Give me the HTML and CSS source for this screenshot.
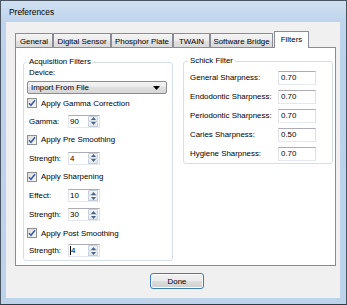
FILE: index.html
```html
<!DOCTYPE html>
<html>
<head>
<meta charset="utf-8">
<link rel="stylesheet" href="styles.css">
</head>
<body>
<div class="window">
  <div class="titlebar"><span class="title">Preferences</span></div>
  <div class="client">
    <div class="tabs">
      <div class="tab w-general">General</div>
      <div class="tab w-digital">Digital Sensor</div>
      <div class="tab w-phosphor">Phosphor Plate</div>
      <div class="tab w-twain">TWAIN</div>
      <div class="tab w-bridge">Software Bridge</div>
      <div class="tab active w-filters">Filters</div>
    </div>
    <div class="panel">
      <fieldset class="group acq">
        <legend>Acquisition Filters</legend>
        <div class="device-label">Device:</div>
        <div class="select"><span class="select-text">Import From File</span><svg class="select-arrow" width="7" height="4" viewBox="0 0 7 4"><path d="M0 0H7L3.5 4Z" fill="#000"/></svg></div>
        <div class="row check r18"><span class="box"><svg width="8" height="8" viewBox="0 0 8 8"><path d="M1 4.2L3 6.3L7 1.2" fill="none" stroke="#3c5ba0" stroke-width="1.5"/></svg></span>Apply Gamma Correction</div>
        <div class="row r18"><span class="spin-label">Gamma:</span><div class="spin"><span class="val">90</span><span class="btns"><span class="sb"><svg width="5" height="3" viewBox="0 0 5 3"><path d="M0 3H5L2.5 0Z" fill="#4d6185"/></svg></span><span class="sb"><svg width="5" height="3" viewBox="0 0 5 3"><path d="M0 0H5L2.5 3Z" fill="#4d6185"/></svg></span></span></div></div>
        <div class="row check r19"><span class="box"><svg width="8" height="8" viewBox="0 0 8 8"><path d="M1 4.2L3 6.3L7 1.2" fill="none" stroke="#3c5ba0" stroke-width="1.5"/></svg></span>Apply Pre Smoothing</div>
        <div class="row r18"><span class="spin-label">Strength:</span><div class="spin"><span class="val">4</span><span class="btns"><span class="sb"><svg width="5" height="3" viewBox="0 0 5 3"><path d="M0 3H5L2.5 0Z" fill="#4d6185"/></svg></span><span class="sb"><svg width="5" height="3" viewBox="0 0 5 3"><path d="M0 0H5L2.5 3Z" fill="#4d6185"/></svg></span></span></div></div>
        <div class="row check r19"><span class="box"><svg width="8" height="8" viewBox="0 0 8 8"><path d="M1 4.2L3 6.3L7 1.2" fill="none" stroke="#3c5ba0" stroke-width="1.5"/></svg></span>Apply Sharpening</div>
        <div class="row r19"><span class="spin-label">Effect:</span><div class="spin"><span class="val">10</span><span class="btns"><span class="sb"><svg width="5" height="3" viewBox="0 0 5 3"><path d="M0 3H5L2.5 0Z" fill="#4d6185"/></svg></span><span class="sb"><svg width="5" height="3" viewBox="0 0 5 3"><path d="M0 0H5L2.5 3Z" fill="#4d6185"/></svg></span></span></div></div>
        <div class="row r19"><span class="spin-label">Strength:</span><div class="spin"><span class="val">30</span><span class="btns"><span class="sb"><svg width="5" height="3" viewBox="0 0 5 3"><path d="M0 3H5L2.5 0Z" fill="#4d6185"/></svg></span><span class="sb"><svg width="5" height="3" viewBox="0 0 5 3"><path d="M0 0H5L2.5 3Z" fill="#4d6185"/></svg></span></span></div></div>
        <div class="row check r18"><span class="box"><svg width="8" height="8" viewBox="0 0 8 8"><path d="M1 4.2L3 6.3L7 1.2" fill="none" stroke="#3c5ba0" stroke-width="1.5"/></svg></span>Apply Post Smoothing</div>
        <div class="row r17"><span class="spin-label">Strength:</span><div class="spin"><span class="val"><span class="caret"></span>4</span><span class="btns"><span class="sb"><svg width="5" height="3" viewBox="0 0 5 3"><path d="M0 3H5L2.5 0Z" fill="#4d6185"/></svg></span><span class="sb"><svg width="5" height="3" viewBox="0 0 5 3"><path d="M0 0H5L2.5 3Z" fill="#4d6185"/></svg></span></span></div></div>
      </fieldset>
      <fieldset class="group schick">
        <legend>Schick Filter</legend>
        <div class="srow"><span class="slabel">General Sharpness:</span><span class="tb">0.70</span></div>
        <div class="srow"><span class="slabel">Endodontic Sharpness:</span><span class="tb">0.70</span></div>
        <div class="srow"><span class="slabel">Periodontic Sharpness:</span><span class="tb">0.70</span></div>
        <div class="srow"><span class="slabel">Caries Sharpness:</span><span class="tb">0.50</span></div>
        <div class="srow"><span class="slabel">Hygiene Sharpness:</span><span class="tb">0.70</span></div>
      </fieldset>
    </div>
    <div class="footer"><button class="done">Done</button></div>
  </div>
</div>
</body>
</html>
```
FILE: styles.css
```css
html, body {
  margin: 0;
  padding: 0;
  background: #fff;
}
body {
  font-family: "Liberation Sans", Arial, sans-serif;
  font-size: 7.9px;
  color: #000;
}
.window {
  width: 347px;
  height: 305px;
  box-sizing: border-box;
  border: 1px solid #4a5563;
  border-bottom: 1px solid #2b3a44;
  padding: 0 6px 6px 5px;
  display: flex;
  flex-direction: column;
  background: linear-gradient(#cfdff0 0px, #bfd5ec 21px, #bbd2eb 60px, #bcd3ea 100%);
}
.titlebar {
  height: 21px;
  display: flex;
  align-items: center;
  padding-left: 3px;
  padding-top: 1px;
  box-sizing: border-box;
}
.title {
  font-size: 8.4px;
  color: #000;
}
.client {
  flex: 1;
  background: #f0f0f0;
  display: flex;
  flex-direction: column;
}
.tabs {
  display: flex;
  align-items: flex-end;
  height: 16px;
  margin: 9px 0 0 9px;
}
.tab {
  height: 14px;
  box-sizing: border-box;
  border: 1px solid #898c95;
  border-bottom: none;
  background: linear-gradient(#f4f4f4, #ececec 50%, #e1e1e1 50%, #dadada);
  display: flex;
  align-items: center;
  justify-content: center;
  padding-top: 1px;
  border-radius: 1px 1px 0 0;
}
.tab.active {
  height: 17px;
  margin-bottom: -1px;
  background: #fff;
  position: relative;
  z-index: 1;
  margin-left: 1px;
  padding-top: 0;
  padding-bottom: 2px;
}
.w-general { width: 38px; }
.w-digital { width: 58px; }
.w-phosphor { width: 62px; }
.w-twain { width: 37px; }
.w-bridge { width: 63px; }
.w-filters { width: 35px; }
.panel {
  margin: 0 4px 0 9px;
  height: 219px;
  box-sizing: border-box;
  border: 1px solid #898c95;
  background: #fff;
  display: flex;
  align-items: flex-start;
  padding: 9px 0 0 7px;
  gap: 10px;
}
.group {
  margin: 0;
  border: 1px solid #d5dfe5;
  border-radius: 3px;
  width: 150px;
  box-sizing: border-box;
  min-width: 0;
}
.group legend {
  padding: 0 2px;
  margin-left: -2px;
  line-height: 10px;
  height: 10px;
}
.acq {
  padding: 0 5px 1px 5px;
}
.schick {
  margin-top: -1px;
  padding: 2px 5px 0 6px;
}
.device-label {
  height: 12px;
  line-height: 12px;
}
.select {
  margin: 2px 0 0 -2px;
  width: 140px;
  height: 13px;
  box-sizing: border-box;
  border: 1px solid #8c8c8c;
  border-radius: 2px;
  background: linear-gradient(#f4f4f4, #ececec 45%, #e0e0e0 50%, #d6d6d6);
  display: flex;
  align-items: center;
  padding: 0 6px 0 3px;
}
.select-text {
  flex: 1;
}
.row {
  display: flex;
  align-items: center;
}
.r17 { height: 17px; }
.r18 { height: 18px; }
.r19 { height: 19px; }
.check {
  margin-left: -2px;
}
.box {
  width: 10px;
  height: 10px;
  box-sizing: border-box;
  border: 1px solid #8e8f8f;
  background: linear-gradient(135deg, #dedede, #f8f8f8);
  margin-right: 4px;
  display: flex;
  align-items: center;
  justify-content: center;
}
.box svg {
  display: block;
}
.spin-label {
  width: 39px;
}
.spin {
  display: flex;
  width: 32px;
  height: 13px;
  box-sizing: border-box;
  border: 1px solid #abadb3;
  border-color: #abadb3 #dbdfe6 #e3e9ef #e2e3ea;
  background: #fff;
}
.val {
  flex: 1;
  padding-left: 1px;
  line-height: 11px;
  display: flex;
  align-items: center;
}
.caret {
  width: 1px;
  height: 9px;
  background: #000;
}
.btns {
  width: 11px;
  display: flex;
  flex-direction: column;
  box-sizing: border-box;
  padding: 0 1px 0 0;
}
.sb {
  flex: 1;
  display: flex;
  align-items: center;
  justify-content: center;
  border: 1px solid #c5cfdb;
  background: linear-gradient(#f3f6f9, #dfe6ee);
  border-radius: 1px;
}
.sb + .sb {
  border-top: none;
}
.sb svg {
  display: block;
}
.srow {
  height: 19px;
  display: flex;
  align-items: center;
}
.slabel {
  width: 88px;
}
.tb {
  width: 38px;
  height: 14px;
  box-sizing: border-box;
  border: 1px solid #abadb3;
  border-color: #abadb3 #dbdfe6 #e3e9ef #e2e3ea;
  padding-left: 2px;
  display: flex;
  align-items: center;
}
.footer {
  display: flex;
  padding-left: 144px;
  margin-top: 7px;
}
.done {
  width: 54px;
  height: 16px;
  box-sizing: border-box;
  border: 1px solid #3c7fb1;
  border-radius: 3px;
  background: linear-gradient(#f2f2f2, #ebebeb 50%, #dddddd 50%, #cfcfcf);
  box-shadow: inset 0 0 0 1px #fcfcfc;
  font-family: "Liberation Sans", Arial, sans-serif;
  font-size: 7.9px;
  color: #000;
  padding: 0;
  margin: 0;
}
```
